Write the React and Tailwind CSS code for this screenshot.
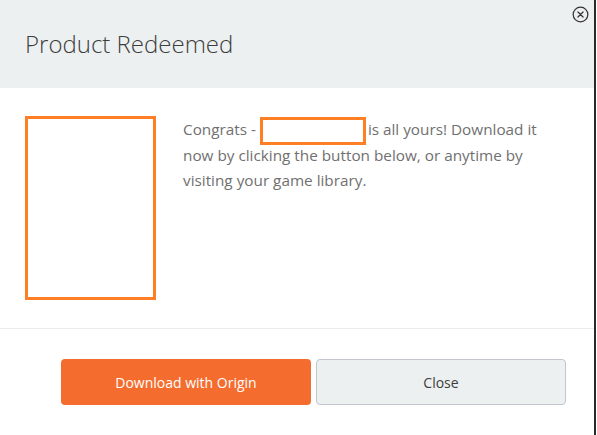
import React from "react";

const CloseIcon = () => (
  <svg width="17" height="17" viewBox="0 0 16 16" fill="none" stroke="#333" strokeWidth="1.15">
    <circle cx="8" cy="8" r="6.9" />
    <path d="M5.6 5.6l4.8 4.8M10.4 5.6l-4.8 4.8" strokeLinecap="round" />
  </svg>
);

const App = () => {
  return (
    <div className="w-[597px] h-[435px] bg-white overflow-hidden" style={{ fontFamily: '"Open Sans", sans-serif' }}>
      <div className="relative w-[596px] h-[435px] border-r-2 border-[#2a2a2a] flex flex-col">
        <button className="absolute top-[6px] right-[5px] leading-none">
          <CloseIcon />
        </button>

        <div className="h-[88px] bg-[#ecf0f1] flex items-center px-[25px] shrink-0">
          <h1 className="text-[24px] font-light text-[#3d3d3d]">Product Redeemed</h1>
        </div>

        <div className="flex gap-[27px] pl-[25px] pr-[30px] pt-[28px] pb-[28px] border-b border-[#ececec]">
          <div className="w-[131px] h-[184px] border-[3px] border-[#ff7f27] shrink-0" />
          <p className="text-[15.3px] leading-[25px] text-[#707070] w-[380px] mt-[1px]">
            Congrats - <span className="inline-block w-[106px] h-[28px] -my-[2px] -mr-[2px] align-middle border-[3px] border-[#ff7f27]" />
            {" "}is all yours! Download it now by clicking the button below, or anytime by visiting your game library.
          </p>
        </div>

        <div className="flex gap-[5px] pl-[61px] pt-[30px]">
          <button className="w-[250px] h-[46px] rounded-[4px] bg-[#f56d2e] text-white text-[14px]">
            Download with Origin
          </button>
          <button className="w-[250px] h-[46px] rounded-[4px] bg-[#ecf0f1] border border-[#c3c7cd] text-[#3d3d3d] text-[14px]">
            Close
          </button>
        </div>
      </div>
    </div>
  );
};

export default App;
